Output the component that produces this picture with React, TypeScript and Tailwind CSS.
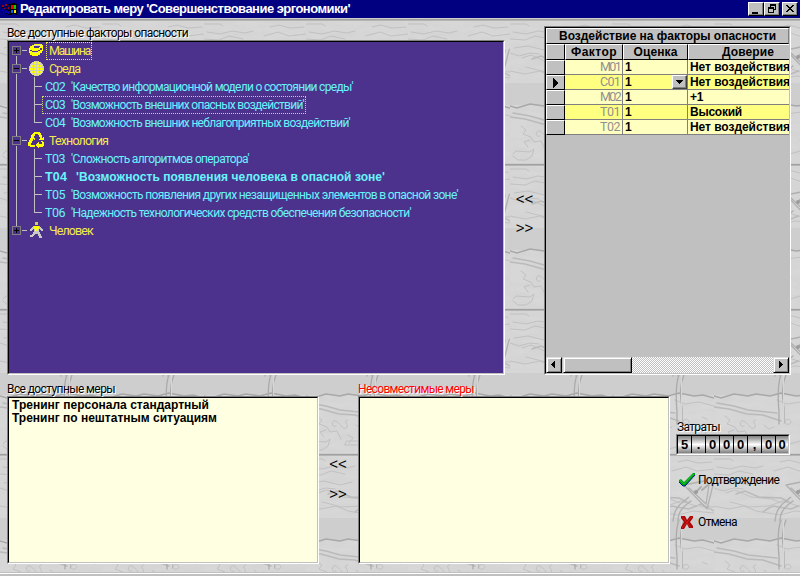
import { useLayoutEffect, useRef } from "react";
import type { ReactNode } from "react";

/* Single line of text whose letter spacing is adjusted to a given width. */
function Fit({ w, children, className = "" }: { w: number; children: string; className?: string }) {
  const ref = useRef<HTMLSpanElement>(null);
  useLayoutEffect(() => {
    const el = ref.current;
    if (!el) return;
    el.style.letterSpacing = "0px";
    const natural = el.getBoundingClientRect().width;
    el.style.letterSpacing = `${(w - natural) / children.length}px`;
  }, [w, children]);
  return (
    <span ref={ref} className={`inline-block shrink-0 whitespace-pre ${className}`}>
      {children}
    </span>
  );
}

/* Embossed stone wall, repeated as a 102 x 145 tile. */
function StoneBackground() {
  return (
    <svg className="absolute inset-0 -z-10" width="800" height="554">
      <defs>
        <filter id="grain" x="0" y="0" width="100%" height="100%">
          <feTurbulence type="fractalNoise" baseFrequency="0.05 0.16" numOctaves="3" seed="7" />
          <feColorMatrix type="saturate" values="0" />
          <feComponentTransfer>
            <feFuncR type="linear" slope="0.28" intercept="0.67" />
            <feFuncG type="linear" slope="0.28" intercept="0.67" />
            <feFuncB type="linear" slope="0.28" intercept="0.67" />
            <feFuncA type="linear" slope="0" intercept="0.3" />
          </feComponentTransfer>
        </filter>
        <pattern id="stone" x="0" y="1" width="102" height="145" patternUnits="userSpaceOnUse">
          <rect width="102" height="145" fill="#cecece" />
          <rect width="102" height="64" filter="url(#grain)" />
          <rect y="86" width="102" height="58" filter="url(#grain)" />
          <g fill="none" strokeLinecap="round">
            <g stroke="#c1c1c1" strokeWidth="1">
              <path d="M0 5h16l3 2M3 13l13 2 12-3 13 2 8-2M0 20l15 1 10-4 14 3M4 29l14-2 16 4 12-3" />
              <path d="M66 8l9-2 11 3 14-1M60 17l14-4 11 4 17-2M0 34l9 3 11-3 9 1M12 39l9-3 16 7 21 2 10 4M16 48l20 5 19-1 14-5 15 5 18 1" />
              <path d="M0 52l15 3 15-3 12 5 24 4 15-4 21 2M63 91l10 4 14-2 15 4" />
              <path d="M11 107l5 4-3 4 8 3 3 5 7-1 4 8M30 117c-6 2-4-7 0-5s7 9 10 7c5-2-5-8 2-8M50 116l5 4 5-2M72 111c4-3 7 3 3 4s-5-2-3-4M86 121l8 2-2 8M76 135l10-3 5 4" />
              <path d="M3 135l3-3 14 1 4-3-2 7-6 4H8l-5-4M39 136h14v-4h-12zM56 140l9-2 5 3M18 128l-4-5 6-2M42 126l5 3-4 5M90 108l5 2" />
            </g>
            <g stroke="#bababa" strokeWidth="1.4">
              <path d="M22 40l9-3 14 6 22 1 8 4M49 58c6-5 11-7 15-5l13 2 12-5 13 7" />
              <path d="M0 98l15 2 18 5 16 1 18 6" />
              <path d="M0 87l7 2 13-4 14 2 8-2 14 2 11-3 15 3 9-1 11 3" stroke="#a8a8a8" />
              <path d="M3 94l17 3 14 4 29 3" />
            </g>
            <path d="M72 66c-4 9-4 22-2 33v15M67 66c-4 10-3 25-2 37v12" stroke="#ababab" strokeWidth="1.3" />
            <path d="M69.500 66v48" stroke="#d6d6d6" />
            <path d="M61 67l1-6c2-9 9-13 15-18M66 67c0-10 6-15 13-20" stroke="#b0b0b0" strokeWidth="1.4" />
            <path d="M72 31l23 24 6-24 1-1M72 31l20-4M77 34l17 16 3-19" stroke="#b0b0b0" strokeWidth="1.3" />
            <path d="M72 32l-3 2 22 23 4-1" stroke="#dadada" />
            <path d="M84 38l5-5M90 36l6-5" stroke="#adadad" strokeWidth="2" />
            <circle cx="84" cy="38" r="2" fill="#9c9c9c" stroke="none" />
          </g>
          <rect width="102" height="1" fill="#a0a0a0" />
          <rect y="1" width="102" height="1" fill="#b5b5b5" />
        </pattern>
      </defs>
      <rect width="800" height="554" fill="url(#stone)" />
    </svg>
  );
}

function Sunken({ className = "", children }: { className?: string; children?: ReactNode }) {
  return (
    <div className={`border border-t-[#808080] border-l-[#808080] border-r-white border-b-white ${className}`}>
      <div className="h-full w-full overflow-hidden border border-t-black border-l-black border-r-[#c0c0c0] border-b-[#c0c0c0]">
        {children}
      </div>
    </div>
  );
}

function WinButton({ children, className = "" }: { children: ReactNode; className?: string }) {
  return (
    <button
      className={`h-[14px] w-4 border border-t-white border-l-white border-r-black border-b-black bg-[#c0c0c0] shadow-[inset_-1px_-1px_0_#808080] ${className}`}
    >
      <svg width="14" height="12" shapeRendering="crispEdges" fill="#000">
        {children}
      </svg>
    </button>
  );
}

function TitleBar() {
  return (
    <header className="flex h-[18px] items-center bg-[#000080] pr-[2px] pl-[2px]">
      <svg width="16" height="16" shapeRendering="crispEdges" className="shrink-0">
        <path d="M8 3h2V2h3v1h2v11h-2v-1h-3v1H8z" fill="#000" />
        <path d="M0 4h2v2H0zM3 3h2v2H3zM2 7h1v1H2zM6 6h1v2H6z" fill="#a00000" />
        <path d="M9 4h3v4H9z" fill="#f00000" />
        <path d="M0 9h2v1H0zM3 10h2v2H3zM1 12h1v1H1zM6 11h1v2H6z" fill="#0000c8" />
        <path d="M9 9h2v3H9z" fill="#0060ff" />
        <path d="M12 4h2v4h-2z" fill="#00d000" />
        <path d="M12 9h2v3h-2z" fill="#ffe000" />
        <path d="M0 6h2v1H0zM3 5h2v1H3zM3 8h2v1H3zM6 9h2v1H6zM6 3h2v1H6zM6 13h2v1H6zM3 12h2v1H3z" fill="#000" />
      </svg>
      <Fit w={330} className="ml-[2px] text-[13px] font-bold text-white">
        Редактировать меру 'Совершенствование эргономики'
      </Fit>
      <div className="ml-auto flex">
        <WinButton>
          <path d="M3 9h6v2H3z" />
        </WinButton>
        <WinButton>
          <path d="M5 1h6v2H5zM5 3h1v1H5zM10 3h1v4h-1zM9 6h1v1H9zM3 4h6v2H3zM3 6h1v4H3zM8 6h1v4H8zM3 9h6v1H3z" />
        </WinButton>
        <WinButton className="ml-[2px]">
          <path d="M3 2h2v1h1v1h2V3h1V2h2v1h-1v1H9v1H8v1h1v1h1v1h1v1H9V8H8V7H6v1H5v1H3V8h1V7h1V6h1V5H5V4H4V3H3z" />
        </WinButton>
      </div>
    </header>
  );
}

const YELLOW = "#ffff00";

function NodeIcon({ kind }: { kind: string }) {
  if (kind === "machine")
    return (
      <g>
        <path d="M20 6h1V4h2V3h2V2h8v1h1v6h-1v2h-2v2h-2v1h-6v-1h-2v-2h-1z" fill={YELLOW} />
        <path d="M25 4h6v1h-1v1h-5zM21 8h2v1h-2zM23 9h6v1h-6zM29 8h2v1h-2zM31 6h2v2h-2z" fill="#4c328c" />
        <path d="M24 3h8v1h-8zM24 10h4v1h-4z" fill="#d8d8c0" />
      </g>
    );
  if (kind === "globe")
    return (
      <g>
        <circle cx="27.500" cy="8.500" r="7.500" fill="#d0d0b8" />
        <path
          d="M25 2h2v2h-2zM29 2h2v2h-2zM22 5h2v2h-2zM25 5h2v2h-2zM28 5h2v2h-2zM31 5h2v2h-2zM21 8h3v2h-3zM25 8h2v2h-2zM28 8h2v2h-2zM31 8h3v2h-3zM22 11h2v2h-2zM25 11h2v2h-2zM28 11h2v2h-2zM31 11h2v2h-2zM25 14h2v1h-2zM29 14h2v1h-2z"
          fill={YELLOW}
        />
      </g>
    );
  if (kind === "recycle")
    return (
      <path
        d="M24 1h1V0h6v1h1v2h1v3h1V5h1v3h-5V7h1V5h-1V3h-1V2h-3v2h-1v2h1v2h-1V7h-1v2h-1v2h-1v2h4v2h-5v-1h-2v-4h1V8h1V6h1V3h1zM32 9h2v1h1v4h-1v1h-4v1h-1v-1h-1v-1h-1v-2h1v-1h1v-1h1v2h3v-2h-1z"
        fill={YELLOW}
      />
    );
  return (
    <g>
      <path d="M26 0h3v3h-3z" fill="#d4c860" />
      <path d="M24 4h7v1h1v1h1v1h1v2h-2V8h-1V7h-1v3h1v2h1v2h1v2h-3v-2h-1v-2h-3v1h-1v1h-1v1h-3v-2h2v-1h1v-2h1V7h-1v1h-1v1h-2V7h1V6h1V5h1z" fill="#c8c8c8" />
      <path d="M25 4h5v3h-1v2h-3V7h-1z" fill={YELLOW} />
    </g>
  );
}

type RootRow = { kind: string; text: string; w: number; open?: boolean; first?: boolean; last?: boolean; focus?: boolean };

function RootNode({ kind, text, w, open, first, last, focus }: RootRow) {
  return (
    <div className="flex h-[18px] items-center">
      <svg width="37" height="18" shapeRendering="crispEdges" className="shrink-0">
        <path
          d={`${first ? "" : "M7.5 0V4"}${last ? "" : "M7.5 14V18"}M13 8.500h5`}
          stroke="#c0c0c0"
          fill="none"
        />
        {open && <path d="M25.500 17v1" stroke="#c0c0c0" />}
        <path d="M3.500 4.500h8v8h-8z" stroke="#808080" fill="none" />
        <path d={open ? "M5 8.500h5" : "M5 8.500h5M7.500 6v5"} stroke="#000" />
        <NodeIcon kind={kind} />
      </svg>
      <div
        className={`flex h-[18px] items-center border border-dotted pl-[2px] pr-px ${focus ? "border-[#e8e850]" : "border-transparent"}`}
      >
        <Fit w={w} className="font-['Roboto'] text-[12.500px] text-[#f4e94e]">{text}</Fit>
      </div>
    </div>
  );
}

type LeafRow = { code: string; text: string; w: number; last?: boolean; focus?: boolean; bold?: boolean };

function Leaf({ code, text, w, last, focus, bold }: LeafRow) {
  return (
    <div className={`flex h-[18px] items-center text-[#68f4fc] ${bold ? "font-bold" : "font-['Roboto']"}`}>
      <svg width="33" height="18" shapeRendering="crispEdges" className="shrink-0">
        <path d={`M7.500 0V18M25.500 0V${last ? "9" : "18"}M25 8.500h8`} stroke="#c0c0c0" fill="none" />
      </svg>
      <div
        className={`flex h-[18px] items-center border border-dotted pl-[2px] pr-px ${focus ? "border-[#c8e060]" : "border-transparent"}`}
      >
        <Fit w={bold ? 22 : 20} className="text-[12.500px]">{code}</Fit>
        <Fit w={w} className={`text-[12px] ${bold ? "ml-[9px]" : "ml-[6px]"}`}>{text}</Fit>
      </div>
    </div>
  );
}

function FactorTree() {
  return (
    <Sunken className="h-[335px] w-[498px] bg-[#4c328c]">
      <RootNode kind="machine" text="Машина" w={41} first focus />
      <RootNode kind="globe" text="Среда" w={31} open />
      <Leaf code="С02" text="'Качество информационной модели о состоянии среды'" w={282} />
      <Leaf code="С03" text="'Возможность внешних опасных воздействий'" w={233} focus />
      <Leaf code="С04" text="'Возможность внешних неблагоприятных воздействий'" w={279} last />
      <RootNode kind="recycle" text="Технология" w={59} open />
      <Leaf code="Т03" text="'Сложность алгоритмов оператора'" w={178} />
      <Leaf code="Т04" text="'Возможность появления человека в опасной зоне'" w={309} bold />
      <Leaf code="Т05" text="'Возможность появления других незащищенных элементов в опасной зоне'" w={387} />
      <Leaf code="Т06" text="'Надежность технологических средств обеспечения безопасности'" w={340} last />
      <RootNode kind="person" text="Человек" w={44} last />
    </Sunken>
  );
}

const raised = "border-t border-l border-t-white border-l-white bg-[#c0c0c0]";

const impacts = [
  { code: "М01", value: "Нет воздействия", w: 100 },
  { code: "С01", value: "Нет воздействия", w: 100, active: true },
  { code: "М02", value: "+1", w: 13 },
  { code: "Т01", value: "Высокий", w: 52 },
  { code: "Т02", value: "Нет воздействия", w: 100 },
];

function HeaderCell({ className, children }: { className: string; children?: ReactNode }) {
  return (
    <div className={`flex h-4 shrink-0 items-center justify-center border-r border-b border-r-black border-b-black ${raised} ${className}`}>
      {children}
    </div>
  );
}

function ScrollArrow({ d }: { d: string }) {
  return (
    <div className="h-4 w-4 shrink-0 border border-t-[#dfdfdf] border-l-[#dfdfdf] border-r-black border-b-black bg-[#c0c0c0] shadow-[inset_1px_1px_0_#fff,inset_-1px_-1px_0_#808080]">
      <svg width="14" height="14">
        <path d={d} fill="#000" shapeRendering="crispEdges" />
      </svg>
    </div>
  );
}

function ImpactGrid() {
  return (
    <Sunken className="h-[349px] w-[247px] bg-[#c0c0c0]">
      <div className="flex h-full flex-col text-[12px] font-bold">
        <div className={`flex h-4 shrink-0 items-center justify-center border-r border-b border-r-[#808080] border-b-black ${raised}`}>
          <Fit w={217}>Воздействие на факторы опасности</Fit>
        </div>
        <div className="flex">
          <HeaderCell className="w-[19px]" />
          <HeaderCell className="w-[58px]"><Fit w={46}>Фактор</Fit></HeaderCell>
          <HeaderCell className="w-[65px]"><Fit w={44}>Оценка</Fit></HeaderCell>
          <HeaderCell className="w-[120px]"><Fit w={52}>Доверие</Fit></HeaderCell>
        </div>
        {impacts.map((row, i) => {
          const bg = i % 2 ? "bg-[#ffff80]" : "bg-[#ffffc0]";
          return (
            <div key={i} className="flex h-[15px] shrink-0">
              <div className={`flex w-[19px] shrink-0 items-center justify-center border-r border-b border-r-black border-b-black ${raised}`}>
                {row.active && (
                  <svg width="6" height="10" shapeRendering="crispEdges" className="ml-px">
                    <path d="M0 0l6 5-6 5z" />
                  </svg>
                )}
              </div>
              <div className={`flex w-[58px] shrink-0 items-center justify-end border-r border-b border-[#808080] pr-[2px] font-['Roboto'] font-normal text-[#909090] ${bg}`}>
                <Fit w={20} className="text-[12.500px]">{row.code}</Fit>
              </div>
              <div className={`flex w-[65px] shrink-0 items-center justify-between border-r border-b border-[#808080] pl-[2px] ${bg}`}>
                <span>1</span>
                {row.active && (
                  <div className="h-[14px] w-[15px] border border-t-white border-l-white border-r-[#404040] border-b-[#404040] bg-[#c0c0c0] shadow-[inset_-1px_-1px_0_#808080]">
                    <svg width="13" height="12" shapeRendering="crispEdges">
                      <path d="M3 4h7L6.500 8z" />
                    </svg>
                  </div>
                )}
              </div>
              <div className={`flex w-[120px] shrink-0 items-center border-b border-[#808080] pl-[2px] ${bg}`}>
                <Fit w={row.w}>{row.value}</Fit>
              </div>
            </div>
          );
        })}
        <div className="mt-auto flex h-4">
          <ScrollArrow d="M8 2v9L4 6.500z" />
          <div className="ml-px h-4 w-[69px] border border-t-[#dfdfdf] border-l-[#dfdfdf] border-r-black border-b-black bg-[#c0c0c0] shadow-[inset_1px_1px_0_#fff,inset_-1px_-1px_0_#808080]" />
          <div className="flex-1 bg-[conic-gradient(#fff_25%,#c0c0c0_0_50%,#fff_0_75%,#c0c0c0_0)] bg-[length:2px_2px]" />
          <ScrollArrow d="M5 2v9l4-4.500z" />
        </div>
      </div>
    </Sunken>
  );
}

function Movers({ className }: { className: string }) {
  return (
    <div className={`flex flex-col items-center text-[15px] leading-[17px] ${className}`}>
      <button>{"<<"}</button>
      <button>{">>"}</button>
    </div>
  );
}

function Label({ w, children, className = "" }: { w: number; children: string; className?: string }) {
  return (
    <div className={`flex h-[14px] items-center font-['Roboto'] text-[12px] leading-[14px] [text-shadow:1px_1px_0_#fff] ${className}`}>
      <Fit w={w}>{children}</Fit>
    </div>
  );
}

function CostCounter() {
  return (
    <Sunken className="h-[21px] w-[114px] bg-white">
      <div className="flex h-full bg-linear-to-b from-[#808080] via-white to-[#808080] text-[13px] font-bold">
        {"5.000,00".split("").map((c, i) => (
          <span key={i} className="flex w-[14px] shrink-0 items-center justify-center border-r border-black last:w-[12px] last:border-r-0">
            {c}
          </span>
        ))}
      </div>
    </Sunken>
  );
}

export default function App() {
  return (
    <div className="flex h-[576px] w-[800px] flex-col overflow-hidden bg-[#c0c0c0] font-['Liberation_Sans',Arial,sans-serif] leading-[14px] text-black">
      <TitleBar />
      <main className="relative isolate flex h-[554px] flex-col overflow-hidden">
        <StoneBackground />
        <section className="flex h-[357px] pl-[7px]">
          <div className="pt-[8px]">
            <Label w={181}>Все доступные факторы опасности</Label>
            <FactorTree />
          </div>
          <Movers className="w-[39px] gap-3 pt-[172px]" />
          <div className="pt-[8px]">
            <ImpactGrid />
          </div>
        </section>
        <section className="flex pl-[7px]">
          <div className="pt-[7px]">
            <Label w={108}>Все доступные меры</Label>
            <Sunken className="h-[168px] w-[312px] bg-[#ffffe1]">
              <ul className="pt-[1px] pl-[3px] text-[12px] leading-[13px] font-bold">
                <li className="h-[13px]"><Fit w={197}>Тренинг персонала стандартный</Fit></li>
                <li className="h-[13px]"><Fit w={205}>Тренинг по нештатным ситуациям</Fit></li>
              </ul>
            </Sunken>
          </div>
          <Movers className="w-[39px] gap-[13px] pt-[80px] pr-px" />
          <div className="pt-[7px]">
            <Label w={116} className="text-[#ff0000]">Несовместимые меры</Label>
            <Sunken className="h-[168px] w-[312px] bg-[#ffffe1]" />
          </div>
          <div className="flex flex-col pt-[45px] pl-[6px] text-[12px]">
            <Label w={43} className="ml-px">Затраты</Label>
            <CostCounter />
            <button className="mt-[15px] flex h-[20px] items-center pl-[2px] font-['Roboto']">
              <svg width="18" height="16" className="mr-[2px]">
                <path d="M1 8l2-1 3 3 9-9h2v2L7 14H5L1 10z" fill="#00a010" />
                <path d="M1 10l4 4h2L17 3" fill="none" stroke="#001890" strokeWidth="1" />
                <path d="M2 8l4 4L15.500 2" fill="none" stroke="#20c830" />
              </svg>
              <Fit w={81}>Подтверждение</Fit>
            </button>
            <button className="mt-[22px] flex h-[20px] items-center pl-[4px] font-['Roboto']">
              <svg width="14" height="16" className="mr-[4px]">
                <path d="M1 2h4l2 4 3-4h3v2l-3 4 3 4v2h-4l-2-4-3 5H1v-2l3-5-3-4z" fill="#a80808" />
                <path d="M2 2.500l9 11M12 2.500L2 14" stroke="#d81818" />
              </svg>
              <Fit w={39}>Отмена</Fit>
            </button>
          </div>
        </section>
      </main>
      <footer className="mt-px h-[3px] border-t border-white bg-[#c0c0c0]" />
    </div>
  );
}
